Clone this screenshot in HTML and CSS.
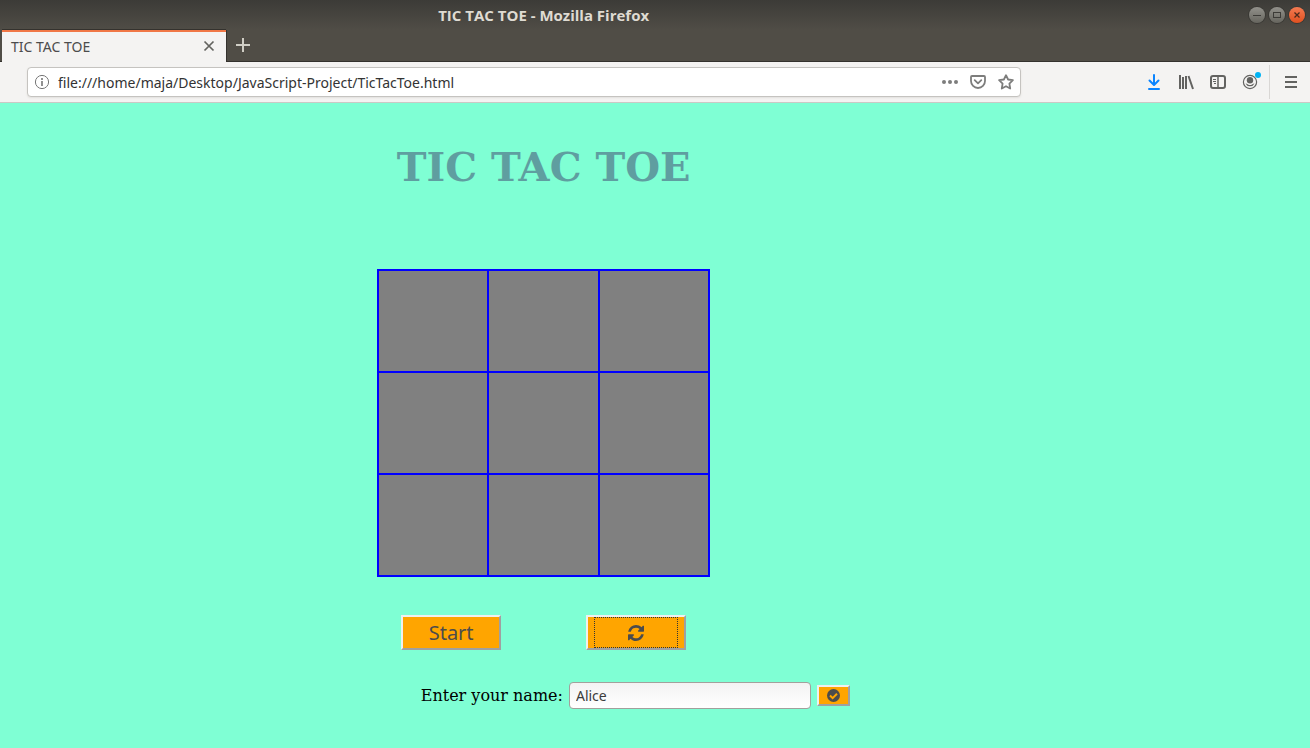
FILE: index.html
```html
<!DOCTYPE html>
<html lang="en">
<head>
<meta charset="utf-8">
<title>TIC TAC TOE</title>
<link rel="stylesheet" href="styles.css">
</head>
<body>
<header class="chrome">
  <div class="titlebar">
    <span class="window-title">TIC TAC TOE - Mozilla Firefox</span>
    <div class="window-controls">
      <button class="window-button" type="button" aria-label="Minimize"><svg width="18" height="18" viewBox="0 0 18 18"><path d="M5 9.5h8" stroke="#3c3b37" stroke-width="1"/></svg></button>
      <button class="window-button" type="button" aria-label="Maximize"><svg width="18" height="18" viewBox="0 0 18 18"><rect x="5.5" y="6.5" width="7" height="5" fill="none" stroke="#3c3b37"/></svg></button>
      <button class="window-button window-close" type="button" aria-label="Close"><svg width="18" height="18" viewBox="0 0 18 18"><path d="M6.5 6.5l5 5m0-5l-5 5" stroke="#4c2a1c" stroke-width="1.3"/></svg></button>
    </div>
  </div>
  <div class="tabstrip">
    <div class="tab">
      <span class="tab-label">TIC TAC TOE</span>
      <button class="icon-button" type="button" aria-label="Close tab"><svg width="16" height="16" viewBox="0 0 16 16"><path d="M3.5 3.5l9 9m0-9l-9 9" stroke="#63635f" stroke-width="1.7"/></svg></button>
    </div>
    <button class="icon-button new-tab" type="button" aria-label="New tab"><svg width="16" height="16" viewBox="0 0 16 16"><path d="M8 1v14M1 8h14" stroke="#d0cec5" stroke-width="2"/></svg></button>
  </div>
  <div class="toolbar">
    <div class="urlbar">
      <svg width="16" height="16" viewBox="0 0 16 16" fill="none" stroke="#777"><circle cx="8" cy="8" r="6.6"/><path d="M8 7v5M8 4v2" stroke-width="1.6"/></svg>
      <input class="url" type="text" aria-label="Address" value="file:///home/maja/Desktop/JavaScript-Project/TicTacToe.html">
      <button class="icon-button" type="button" aria-label="Page actions"><svg width="16" height="16" viewBox="0 0 16 16" fill="#7d7d7c"><circle cx="2" cy="8" r="2"/><circle cx="8" cy="8" r="2"/><circle cx="14" cy="8" r="2"/></svg></button>
      <button class="icon-button" type="button" aria-label="Save to Pocket"><svg width="16" height="16" viewBox="0 0 16 16" fill="none" stroke="#7d7d7c" stroke-width="1.8" stroke-linecap="round" stroke-linejoin="round"><path d="M2 2h12q1 0 1 1v4a7 7 0 0 1-14 0V3q0-1 1-1z"/><path d="M4.7 6.2L8 9.4l3.3-3.2"/></svg></button>
      <button class="icon-button" type="button" aria-label="Bookmark"><svg width="16" height="16" viewBox="0 0 16 16" fill="none" stroke="#7d7d7c" stroke-width="1.8" stroke-linejoin="round"><path d="M8 1.2l2.1 4.3 4.8.7-3.5 3.4.8 4.9L8 12.2l-4.2 2.3.8-4.9L1.1 6.2l4.8-.7z"/></svg></button>
    </div>
    <div class="tools">
      <button class="icon-button" type="button" aria-label="Downloads"><svg width="16" height="16" viewBox="0 0 16 16" fill="none" stroke="#0a84ff" stroke-width="2" stroke-linecap="round" stroke-linejoin="round"><path d="M8 1v9.5M3.5 6.5L8 11l4.5-4.5M3 15h10"/></svg></button>
      <button class="icon-button" type="button" aria-label="Library"><svg width="16" height="16" viewBox="0 0 16 16" fill="none" stroke="#636361" stroke-width="2"><path d="M2 1v14M5 3v12M8 2v13M10.500 2l4.500 13"/></svg></button>
      <button class="icon-button" type="button" aria-label="Sidebars"><svg width="16" height="16" viewBox="0 0 16 16" fill="none" stroke="#636361"><rect x="1" y="2" width="14" height="12" rx="2" stroke-width="2"/><path d="M8 2v12" stroke-width="1.5"/><path d="M3 5.5h3M3 7.5h3M4 9.5h2"/></svg></button>
      <button class="icon-button account" type="button" aria-label="Account"><svg width="16" height="16" viewBox="0 0 16 16"><circle cx="8" cy="8" r="6.6" fill="none" stroke="#636361" stroke-width="1.2"/><circle cx="8" cy="6.2" r="3.2" fill="#636361"/><path d="M3.500 9.500q1.500 0 2.500 1 2 1 4 0 1-1 2.500-1a5 5 0 0 1-9 0z" fill="#636361"/></svg><span class="badge"></span></button>
      <span class="divider"></span>
      <button class="icon-button" type="button" aria-label="Menu"><svg width="16" height="16" viewBox="0 0 16 16"><path d="M2 3h12M2 8h12M2 13h12" stroke="#636361" stroke-width="2"/></svg></button>
    </div>
  </div>
</header>
<main class="page">
  <section class="game">
    <h1 class="heading">TIC TAC TOE</h1>
    <div class="board">
      <div class="cell"></div><div class="cell"></div><div class="cell"></div>
      <div class="cell"></div><div class="cell"></div><div class="cell"></div>
      <div class="cell"></div><div class="cell"></div><div class="cell"></div>
    </div>
    <div class="actions">
      <button class="game-button" type="button">Start</button>
      <button class="game-button" type="button" aria-label="Restart"><span class="focus-ring"><svg width="16" height="16" viewBox="0 0 1536 1536" fill="#4c4c4c"><path d="M1511 928q0 5-1 7-64 268-268 434.500T764 1536q-146 0-282.500-55T238 1324l-129 129q-19 19-45 19t-45-19-19-45V960q0-26 19-45t45-19h448q26 0 45 19t19 45-19 45l-137 137q71 66 161 102t187 36q134 0 250-65t186-179q11-17 53-117 8-23 30-23h192q13 0 22.500 9.500t9.500 22.500zm25-800v448q0 26-19 45t-45 19h-448q-26 0-45-19t-19-45 19-45l138-138Q969 256 768 256q-134 0-250 65T332 500q-11 17-53 117-8 23-30 23H50q-13 0-22.500-9.500T18 608v-7q65-268 270-434.500T768 0q146 0 284 55.500T1297 212l130-129q19-19 45-19t45 19 19 45z"/></svg></span></button>
    </div>
  </section>
  <form class="name-form">
    <label for="player">Enter your name:</label>
    <input class="name-input" id="player" type="text" value="Alice">
    <button class="confirm" type="button" aria-label="Confirm name"><svg width="13" height="13" viewBox="0 0 13 13"><circle cx="6.5" cy="6.5" r="6.5" fill="#4c4c4c"/><path d="M3 6.5l2.600 2.600L10 4.700" fill="none" stroke="#ffa500" stroke-width="2"/></svg></button>
  </form>
</main>
</body>
</html>
```
FILE: styles.css
```css
* { box-sizing: border-box; }
body {
  margin: 0;
  min-height: 100vh;
  display: flex;
  flex-direction: column;
  background: #7fffd4;
  font-family: "Noto Sans", sans-serif;
  font-size: 14px;
  color: #3c3c3c;
}
button { padding: 0; font: inherit; color: inherit; }
svg { display: block; }
.chrome { background: linear-gradient(#3c3b37, #504d46 30px); }
.titlebar {
  display: grid;
  grid-template-columns: 83fr 17fr;
  align-items: center;
  height: 30px;
}
.window-title {
  text-align: center;
  font-family: "Open Sans", sans-serif;
  font-size: 15px;
  line-height: 20px;
  font-weight: 700;
  color: #dfdbd2;
}
.window-controls { display: flex; justify-content: flex-end; gap: 4px; padding-right: 5px; }
.window-button {
  width: 16px;
  height: 16px;
  display: flex;
  align-items: center;
  justify-content: center;
  border: 0;
  border-radius: 50%;
  background: linear-gradient(#92918b, #66655e);
  box-shadow: 0 0 0 1px #3a3935;
}
.window-button svg { flex: none; }
.window-close { background: linear-gradient(#f47b52, #e0501f); }
.tabstrip {
  display: flex;
  height: 32px;
  padding-left: 2px;
  border-bottom: 1px solid #34322e;
}
.tab {
  display: flex;
  align-items: center;
  justify-content: space-between;
  width: 224px;
  margin-bottom: -1px;
  padding: 0 9px 2px;
  border-top: 2px solid #f07746;
  background: #f4f3f2;
  box-shadow: 0 -1px #34322e, 1px 0 #34322e;
  color: #4c4c4c;
}
.icon-button { display: flex; align-items: center; border: 0; background: none; }
.new-tab { margin-left: 9px; padding-bottom: 2px; }
.toolbar {
  display: flex;
  align-items: center;
  justify-content: space-between;
  height: 41px;
  padding: 0 11px 0 27px;
  background: #f4f3f2;
  border-bottom: 1px solid #cbc9c5;
}
.urlbar {
  flex: 1;
  display: flex;
  align-items: center;
  gap: 12px;
  height: 30px;
  margin-right: 125px;
  padding: 0 6px;
  border: 1px solid #c5c3c0;
  border-radius: 4px;
  background: #fff;
  box-shadow: 0 1px 2px #e2e0dd;
}
.url {
  flex: 1;
  min-width: 0;
  margin-left: -4px;
  padding: 0;
  border: 0;
  background: none;
  font: inherit;
  color: #333;
}
.tools { display: flex; align-items: center; gap: 16px; }
.account { position: relative; }
.badge {
  position: absolute;
  top: -2px;
  right: -3px;
  width: 6px;
  height: 6px;
  border-radius: 50%;
  background: #00b3f4;
}
.divider { width: 1px; height: 34px; margin: 0 -3px 0 -5px; background: #d9d7d5; }
.page { flex: 1; padding-bottom: 38px; }
.game {
  width: 83%;
  display: flex;
  flex-direction: column;
  align-items: center;
}
.heading {
  margin: 40px 0 79px;
  font: 700 40px/47px "DejaVu Serif", serif;
  color: #5f9ea0;
}
.board {
  display: grid;
  grid-template-columns: 108px 109px 108px;
  grid-auto-rows: 100px;
  gap: 2px;
  padding: 2px;
  background: #00f;
}
.cell { background: #808080; }
.actions { display: flex; gap: 85px; margin-top: 38px; }
.game-button {
  width: 100px;
  height: 35px;
  display: flex;
  align-items: center;
  justify-content: center;
  border: 2px solid;
  border-color: #f0f0f0 #a0a0a0 #a0a0a0 #f0f0f0;
  background: #ffa500;
  font-size: 20px;
  line-height: 28px;
  color: #4c4c4c;
}
.focus-ring {
  width: 84px;
  height: 31px;
  display: flex;
  align-items: center;
  justify-content: center;
  border: 1px dotted #333;
}
.name-form {
  width: 97%;
  display: flex;
  align-items: center;
  justify-content: center;
  gap: 6px;
  margin-top: 32px;
  font: 16px/19px "DejaVu Serif", serif;
  color: #000;
}
.name-input {
  width: 242px;
  height: 27px;
  padding: 0 6px;
  border: 1px solid #a3a09c;
  border-radius: 4px;
  background: linear-gradient(#f3f3f3, #fff);
  font: 14px "Noto Sans", sans-serif;
  color: #3c3c3c;
}
.confirm {
  width: 33px;
  height: 21px;
  display: flex;
  align-items: center;
  justify-content: center;
  border: 2px solid;
  border-color: #f0f0f0 #a0a0a0 #a0a0a0 #f0f0f0;
  background: #ffa500;
}
```
